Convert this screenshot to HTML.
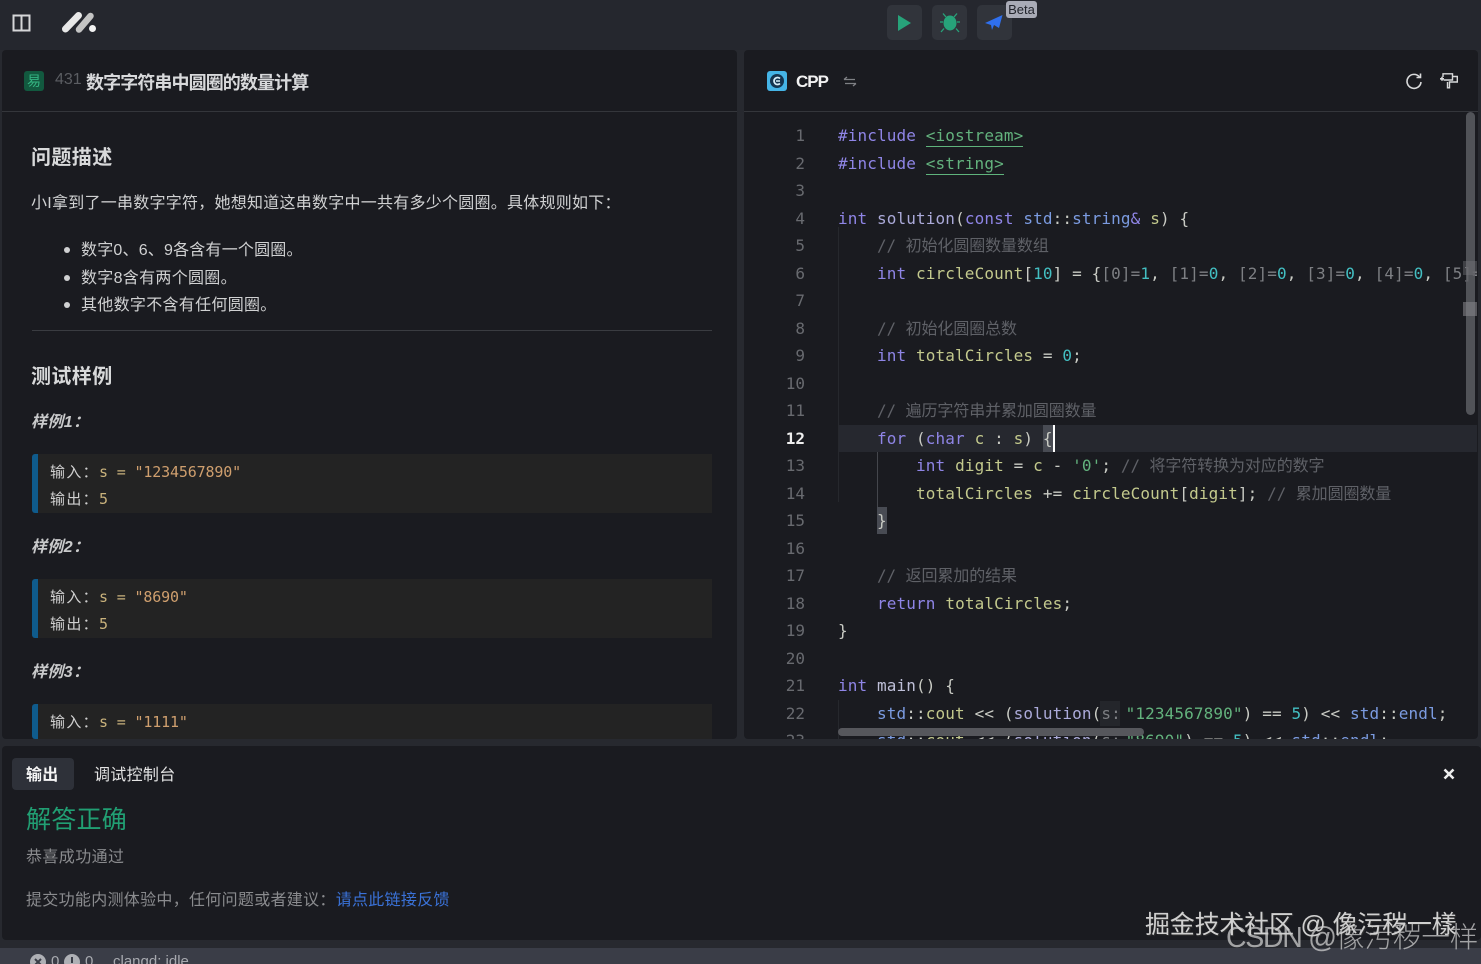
<!DOCTYPE html>
<html lang="zh">
<head>
<meta charset="utf-8">
<title>数字字符串中圆圈的数量计算</title>
<style>
html,body{margin:0;padding:0;width:1481px;height:964px;overflow:hidden;background:#27292f}
body{position:relative;font-family:"Liberation Sans","Noto Sans CJK SC",sans-serif;color:#d4d5d6}
.a{position:absolute;white-space:nowrap}
.top{left:0;top:0;width:1481px;height:50px;background:#25272e}
.panel{background:#1a1b20;border-radius:4px;overflow:hidden}
.btn{top:5px;width:35px;height:35px;background:#31343b;border-radius:5px}
.h{font-size:20px;font-weight:700;line-height:28px;color:#d8d9da;letter-spacing:.4px}
.p{font-size:16px;line-height:24px;color:#d0d1d2}
.ex{font-size:16px;line-height:24px;font-weight:700;font-style:italic;color:#c9cacb;letter-spacing:.4px}
.cb{left:32px;width:680px;background:#232323;border-left:6px solid #0f5b8c;box-sizing:border-box;border-radius:3px 0 0 3px}
.cb div{position:absolute;left:12px;font-size:15px;line-height:27px;white-space:nowrap;color:#d0d0d0;font-family:"DejaVu Sans Mono","Noto Sans CJK SC",monospace;letter-spacing:-.155px}
.cb i{font-style:normal;font-family:"Noto Sans CJK SC",sans-serif;letter-spacing:1.33px}
.cb b{font-weight:400;color:#c9b27c}
.cb s{text-decoration:none;color:#cf9f6e}
#code{left:838px;top:112px;width:639px;height:627px;overflow:hidden;font:16px/27.5px "DejaVu Sans Mono","Noto Sans CJK SC",monospace;letter-spacing:.12px;color:#c9cbc4;padding-top:10px;box-sizing:border-box}
#code div{height:27.5px;white-space:pre}
#nums{left:770px;top:112px;width:35px;height:627px;overflow:hidden;text-align:right;font:16px/27.5px "DejaVu Sans Mono",monospace;color:#686a6f;padding-top:10px;box-sizing:border-box}
#nums div{height:27.5px}
.k{color:#8f85e6}.f{color:#abaad9}.t{color:#7b9be0}.v{color:#c3c98d}.n{color:#43bfc2}.c{color:#5f6167;letter-spacing:-.1px}.g{color:#63b27d}.u{border-bottom:1.5px solid #5fb37c;padding-bottom:1px}.b{color:#7d7f83}
</style>
</head>
<body>
<div class="a top"></div>
<!-- left top icons -->
<svg class="a" style="left:12px;top:14px" width="20" height="18" viewBox="0 0 20 18" fill="none" stroke="#d5d6d8" stroke-width="2"><rect x="1.500" y="1.500" width="16" height="15"/><path d="M9.500 1.500v15"/></svg>
<svg class="a" style="left:60px;top:10px" width="38" height="24" viewBox="0 0 38 24" stroke-linecap="round" fill="none"><path d="M5.500 19L18.500 5.500" stroke="#e8e8e8" stroke-width="7"/><path d="M19 19.500L30.500 6" stroke="#c4c4c4" stroke-width="6.500"/><circle cx="32.500" cy="18.500" r="3.500" fill="#f2f2f2"/></svg>
<!-- center buttons -->
<div class="a btn" style="left:887px"></div>
<svg class="a" style="left:897px;top:14px" width="16" height="18" viewBox="0 0 16 18"><path d="M1 1L14 9 1 17z" fill="#27a37a"/></svg>
<div class="a btn" style="left:932px"></div>
<svg class="a" style="left:939px;top:12px" width="22" height="21" viewBox="0 0 22 21" stroke="#27a37a" stroke-width="1.300" fill="none"><ellipse cx="11" cy="11" rx="6.500" ry="7.500" fill="#27a37a" stroke="none"/><path d="M4 1.500l3 3.500M18 1.500l-3 3.500M1 10h3M21 10h-3M2 20l3-3.500M20 20l-3-3.500"/></svg>
<div class="a btn" style="left:977px"></div>
<svg class="a" style="left:984px;top:14px" width="20" height="18" viewBox="0 0 20 18"><path d="M1 9L18.500 1 15 14 10 11 8 16 7 11z" fill="#2f6fed"/></svg>
<div class="a" style="left:1006px;top:1px;width:31px;height:17px;background:#a9abb6;border-radius:3px;color:#23252c;font-size:13px;line-height:17px;text-align:center">Beta</div>

<!-- left panel -->
<div class="a panel" style="left:2px;top:50px;width:735px;height:689px"></div>
<div class="a" style="left:2px;top:111px;width:735px;height:1px;background:#34363b"></div>
<div class="a" style="left:24px;top:71px;width:20px;height:20px;background:#12593f;border-radius:3px;color:#35b583;font-size:14px;line-height:20px;text-align:center">易</div>
<div class="a" style="left:55px;top:70px;font-size:16px;line-height:20px;color:#5b5d62">431</div>
<div class="a" style="left:86px;top:70px;font-size:18px;line-height:27px;font-weight:700;color:#d8d9db;letter-spacing:-.9px">数字字符串中圆圈的数量计算</div>

<div class="a h" style="left:31px;top:144px">问题描述</div>
<div class="a p" style="left:31px;top:192px;letter-spacing:.25px">小I拿到了一串数字字符，她想知道这串数字中一共有多少个圆圈。具体规则如下：</div>
<div class="a" style="left:64px;top:247px;width:6px;height:6px;border-radius:50%;background:#d0d1d2"></div>
<div class="a p" style="left:81px;top:239px;letter-spacing:.2px">数字0、6、9各含有一个圆圈。</div>
<div class="a" style="left:64px;top:275px;width:6px;height:6px;border-radius:50%;background:#d0d1d2"></div>
<div class="a p" style="left:81px;top:267px;letter-spacing:.3px">数字8含有两个圆圈。</div>
<div class="a" style="left:64px;top:302px;width:6px;height:6px;border-radius:50%;background:#d0d1d2"></div>
<div class="a p" style="left:81px;top:294px;letter-spacing:.3px">其他数字不含有任何圆圈。</div>
<div class="a" style="left:32px;top:330px;width:680px;height:1px;background:#3a3c41"></div>
<div class="a h" style="left:31px;top:363px">测试样例</div>

<div class="a ex" style="left:31px;top:411px">样例1：</div>
<div class="a cb" style="top:454px;height:59px"><div style="top:4px"><i>输入：</i><b>s = </b><s>"1234567890"</s></div><div style="top:31px"><i>输出：</i><b>5</b></div></div>
<div class="a ex" style="left:31px;top:536px">样例2：</div>
<div class="a cb" style="top:579px;height:59px"><div style="top:4px"><i>输入：</i><b>s = </b><s>"8690"</s></div><div style="top:31px"><i>输出：</i><b>5</b></div></div>
<div class="a ex" style="left:31px;top:661px">样例3：</div>
<div class="a cb" style="top:704px;height:35px;overflow:hidden"><div style="top:4px"><i>输入：</i><b>s = </b><s>"1111"</s></div></div>

<!-- right panel -->
<div class="a panel" style="left:744px;top:50px;width:734px;height:689px"></div>
<div class="a" style="left:744px;top:111px;width:734px;height:1px;background:#34363b"></div>
<svg class="a" style="left:767px;top:71px" width="20" height="20" viewBox="0 0 20 20"><rect width="20" height="20" rx="3" fill="#45b4e6"/><circle cx="10" cy="10" r="7" fill="#14344f"/><path d="M13 7.500A3.500 3.500 0 1 0 13 12.500" fill="none" stroke="#d5ecf7" stroke-width="1.800"/><path d="M9 10h4" stroke="#d5ecf7" stroke-width="1.500"/></svg>
<div class="a" style="left:796px;top:70px;font-size:17px;line-height:23px;font-weight:700;color:#f2f2f2;letter-spacing:-1px">CPP</div>
<svg class="a" style="left:843px;top:76px" width="14" height="11" viewBox="0 0 14 11" fill="none" stroke="#7f8185" stroke-width="1.300"><path d="M1 3.500h11M1 3.500L4 1M13 7.500H2M13 7.500L10 10"/></svg>
<svg class="a" style="left:1405px;top:72px" width="18" height="18" viewBox="0 0 18 18" fill="none" stroke="#d8d9da" stroke-width="1.600"><path d="M14.500 5A7 7 0 1 0 16 10"/><path d="M15.500 1.500V5.500H11.500"/></svg>
<svg class="a" style="left:1439px;top:72px" width="20" height="18" viewBox="0 0 20 18" fill="none" stroke="#d8d9da" stroke-width="1.400"><path d="M4 5V1.800h9.500V8H4.500"/><path d="M13.500 4.500h4.800v5.500H10.500V15.800H8.500V10"/><path d="M1 6.800h4M3 4.800v4" stroke-width="1.600"/></svg>

<div class="a" style="left:838px;top:425px;width:639px;height:27px;background:#26282f"></div>
<div class="a" style="left:838px;top:227px;width:1px;height:275px;background:#26282d"></div>
<div class="a" style="left:838px;top:700px;width:1px;height:39px;background:#26282d"></div>
<div class="a" style="left:877px;top:452px;width:1px;height:55px;background:#44464c"></div>
<div class="a" style="left:1043px;top:425px;width:10px;height:27px;background:#484b53"></div>
<div class="a" style="left:877px;top:507px;width:10px;height:27px;background:#484b53"></div>
<div class="a" style="left:1100px;top:701px;width:20px;height:25px;background:#24262b"></div>

<div class="a" id="nums"><div>1</div><div>2</div><div>3</div><div>4</div><div>5</div><div>6</div><div>7</div><div>8</div><div>9</div><div>10</div><div>11</div><div style="color:#eee;font-weight:700">12</div><div>13</div><div>14</div><div>15</div><div>16</div><div>17</div><div>18</div><div>19</div><div>20</div><div>21</div><div>22</div><div>23</div></div>

<div class="a" id="code">
<div><span class="k">#include</span> <span class="g u">&lt;iostream&gt;</span></div>
<div><span class="k">#include</span> <span class="g u">&lt;string&gt;</span></div>
<div> </div>
<div><span class="k">int</span> <span class="f">solution</span>(<span class="k">const</span> <span class="t">std</span>::<span class="t">string</span><span class="k">&amp;</span> <span class="v">s</span>) {</div>
<div>    <span class="c">// 初始化圆圈数量数组</span></div>
<div>    <span class="k">int</span> <span class="v">circleCount</span>[<span class="n">10</span>] = {<span class="b">[0]=</span><span class="n">1</span>, <span class="b">[1]=</span><span class="n">0</span>, <span class="b">[2]=</span><span class="n">0</span>, <span class="b">[3]=</span><span class="n">0</span>, <span class="b">[4]=</span><span class="n">0</span>, <span class="b">[5]=</span></div>
<div> </div>
<div>    <span class="c">// 初始化圆圈总数</span></div>
<div>    <span class="k">int</span> <span class="v">totalCircles</span> = <span class="n">0</span>;</div>
<div> </div>
<div>    <span class="c">// 遍历字符串并累加圆圈数量</span></div>
<div>    <span class="k">for</span> (<span class="k">char</span> <span class="v">c</span> : <span class="v">s</span>) {</div>
<div>        <span class="k">int</span> <span class="v">digit</span> = <span class="v">c</span> - <span class="g">'0'</span>; <span class="c">// 将字符转换为对应的数字</span></div>
<div>        <span class="v">totalCircles</span> += <span class="v">circleCount</span>[<span class="v">digit</span>]; <span class="c">// 累加圆圈数量</span></div>
<div>    }</div>
<div> </div>
<div>    <span class="c">// 返回累加的结果</span></div>
<div>    <span class="k">return</span> <span class="v">totalCircles</span>;</div>
<div>}</div>
<div> </div>
<div><span class="k">int</span> <span style="color:#bfc0d8">main</span>() {</div>
<div>    <span class="t">std</span>::<span class="v">cout</span> &lt;&lt; (<span class="f">solution</span>(<span class="b" style="margin-right:-5px">s:</span> <span class="g">"1234567890"</span>) == <span class="n">5</span>) &lt;&lt; <span class="t">std</span>::<span class="t">endl</span>;</div>
<div>    <span class="t">std</span>::<span class="v">cout</span> &lt;&lt; (<span class="f">solution</span>(<span class="b" style="margin-right:-5px">s:</span> <span class="g">"8690"</span>) == <span class="n">5</span>) &lt;&lt; <span class="t">std</span>::<span class="t">endl</span>;</div>
</div>
<div class="a" style="left:1053px;top:425px;width:2px;height:27px;background:#fff"></div>

<!-- scrollbars -->
<div class="a" style="left:1466px;top:112px;width:9px;height:303px;background:rgba(92,93,99,.85);border-radius:5px"></div>
<div class="a" style="left:1463px;top:261px;width:14px;height:14px;background:rgba(120,120,125,.4)"></div>
<div class="a" style="left:1463px;top:302px;width:14px;height:14px;background:rgba(130,130,135,.6)"></div>
<div class="a" style="left:838px;top:728px;width:306px;height:8px;background:#56575c;border-radius:4px"></div>

<!-- bottom panel -->
<div class="a panel" style="left:2px;top:746px;width:1479px;height:194px"></div>
<div class="a" style="left:12px;top:758px;width:62px;height:32px;background:#2e3139;border-radius:4px"></div>
<div class="a" style="left:26px;top:764px;font-size:16px;line-height:24px;font-weight:700;color:#f5f5f5;letter-spacing:.3px">输出</div>
<div class="a" style="left:94px;top:764px;font-size:16px;line-height:24px;color:#e4e4e4;letter-spacing:.3px">调试控制台</div>
<svg class="a" style="left:1443px;top:768px" width="12" height="12" viewBox="0 0 12 12" stroke="#eceded" stroke-width="2.600"><path d="M1.500 1.500l9 9M10.500 1.500l-9 9"/></svg>
<div class="a" style="left:26px;top:802px;font-size:25px;line-height:36px;color:#219f73;letter-spacing:.25px">解答正确</div>
<div class="a" style="left:26px;top:846px;font-size:16px;line-height:24px;color:#8a8b8e;letter-spacing:.4px">恭喜成功通过</div>
<div class="a" style="left:26px;top:889px;font-size:16px;line-height:24px;color:#8a8b8e;letter-spacing:.3px">提交功能内测体验中，任何问题或者建议：<span style="color:#3a72d8">请点此链接反馈</span></div>

<!-- status bar -->
<div class="a" style="left:0;top:948px;width:1481px;height:16px;background:#3a3d47;overflow:hidden">
<svg class="a" style="left:30px;top:6px" width="16" height="16" viewBox="0 0 16 16"><circle cx="8" cy="8" r="8" fill="#aeb0b5"/><path d="M5 5l6 6M11 5l-6 6" stroke="#3a3d47" stroke-width="2"/></svg>
<div class="a" style="left:51px;top:5px;font-size:15px;line-height:18px;color:#a8aab0">0</div>
<svg class="a" style="left:64px;top:6px" width="16" height="16" viewBox="0 0 16 16"><circle cx="8" cy="8" r="8" fill="#aeb0b5"/><path d="M8 3v6" stroke="#3a3d47" stroke-width="2"/></svg>
<div class="a" style="left:85px;top:5px;font-size:15px;line-height:18px;color:#a8aab0">0</div>
<div class="a" style="left:113px;top:5px;font-size:15px;line-height:18px;color:#a8aab0">clangd: idle</div>
</div>

<!-- watermarks -->
<div class="a" style="left:1145px;top:907px;font-size:25px;line-height:36px;color:#d0d0d0;letter-spacing:-.2px;text-shadow:1px 1px 1px #333">掘金技术社区 @ 像污秽一樣</div>
<div class="a" style="left:1226px;top:919px;font-size:28.500px;line-height:38px;color:rgba(205,205,205,.75);font-weight:300"><span style="letter-spacing:-1.300px">CSDN @</span>像污秽一样</div>
</body>
</html>
